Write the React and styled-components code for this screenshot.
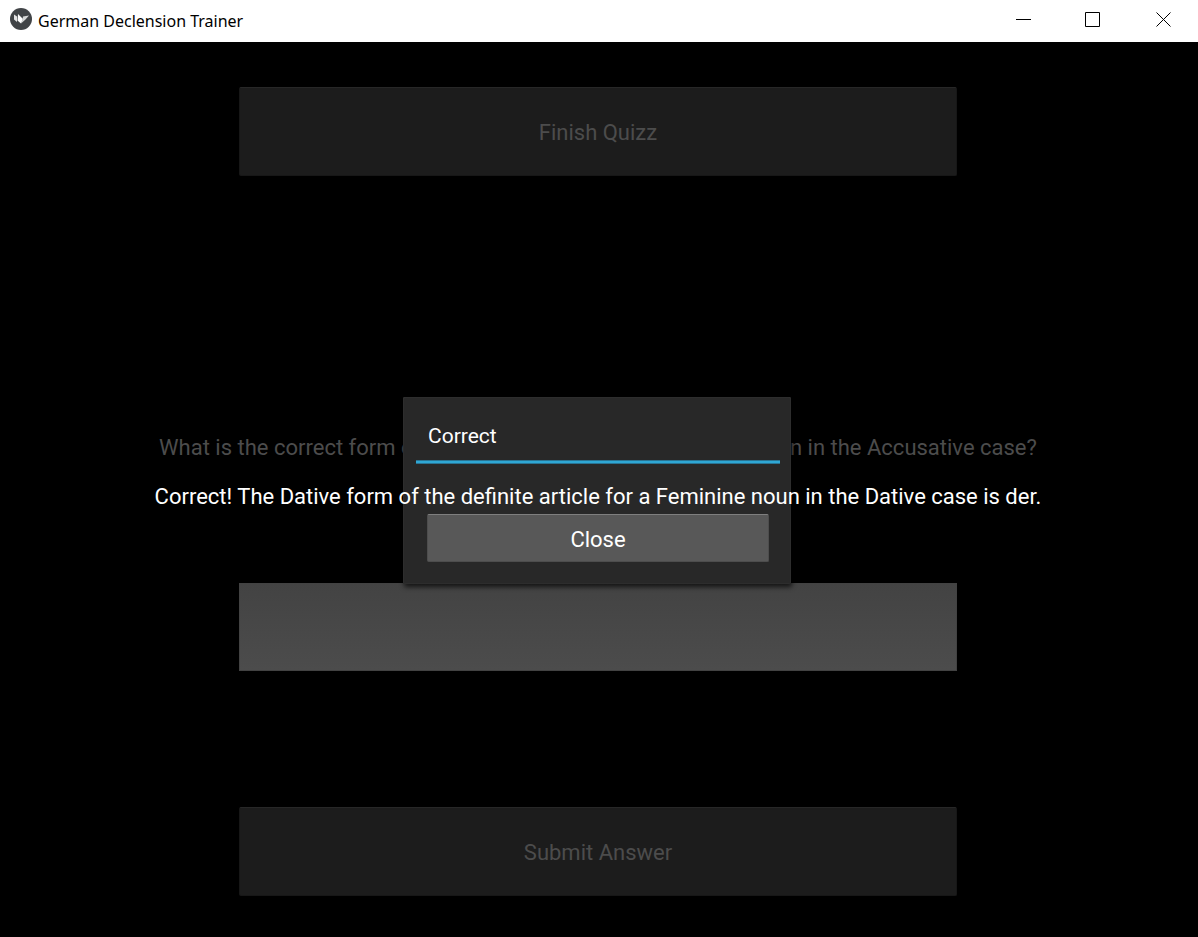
import React from "react";
import styled, { createGlobalStyle } from "styled-components";

const GlobalStyle = createGlobalStyle`
  * { box-sizing: border-box; }
  body { margin: 0; background: #000; font-family: Roboto, sans-serif; }
  button, input { font: inherit; margin: 0; padding: 0; }
`;

const Window = styled.div`
  display: flex;
  flex-direction: column;
  min-height: 100vh;
  overflow: hidden;
`;

const TitleBar = styled.header`
  display: flex;
  align-items: center;
  height: 42px;
  padding: 0 0 4px 10px;
  background: #fff;
  color: #000;
`;

const AppTitle = styled.h1`
  flex: 1;
  margin: 0 0 0 6px;
  padding-top: 4px;
  font: 400 16px/24px "Noto Sans", sans-serif;
`;

const WindowButton = styled.button`
  display: grid;
  place-items: center;
  width: 70px;
  height: 38px;
  border: 0;
  background: transparent;
`;

const Screen = styled.div`
  display: grid;
  flex: 1;
`;

const Quiz = styled.main`
  grid-area: 1 / 1;
  display: grid;
  grid-template-columns: 60%;
  grid-template-rows: 89px 1fr 2fr 88px 1fr 89px;
  justify-content: center;
  padding: 45px 2px 41px 0;
  font-size: 22px;
  line-height: 30px;
`;

const QuizButton = styled.button`
  grid-row: ${(p) => p.$row};
  padding-top: 3px;
  border: 1px solid #171717;
  border-top-color: #272727;
  border-radius: 2px;
  background: #1c1c1c;
  color: #4c4c4c;
`;

const Question = styled.label`
  grid-row: 3;
  place-self: center;
  color: #4c4c4c;
  white-space: nowrap;
`;

const AnswerInput = styled.input`
  grid-row: 4;
  width: 100%;
  padding: 0 12px;
  border: 1px solid #424242;
  border-radius: 0;
  outline: 0;
  background: linear-gradient(#434343, #4c4c4c);
  color: #000;
`;

const ModalLayer = styled.div`
  grid-area: 1 / 1;
  z-index: 1;
  display: grid;
  place-items: center;
  padding: 2px 4px 0 0;
`;

const Popup = styled.section`
  width: 388px;
  padding: 12px 11px 12px 13px;
  border-radius: 2px;
  background: #282828;
  box-shadow: inset 0 0 0 1px #2d2d2d, inset 0 1px #383838, 1px 3px 5px rgba(0, 0, 0, 0.7);
  color: #fff;
  font-size: 22px;
  line-height: 30px;
`;

const PopupTitle = styled.h2`
  margin: 0 0 1px;
  padding: 12px 12px 10px;
  border-bottom: 2px solid #2fa7d4;
  box-shadow: inset 0 -1px #297493, 0 1px #297493;
  font-size: 21px;
  font-weight: 400;
  line-height: 30px;
`;

const PopupBody = styled.div`
  display: flex;
  flex-direction: column;
  align-items: center;
  gap: 2px;
  padding: 18px 11px 10px;
`;

const Message = styled.p`
  margin: 0;
  white-space: nowrap;
`;

const CloseButton = styled.button`
  width: 100%;
  height: 48px;
  padding-top: 3px;
  border: 1px solid #4d4d4d;
  border-top-color: #7f7f7f;
  border-radius: 2px;
  background: #585858;
  color: #fff;
`;

function KivyLogo() {
  return (
    <svg width="22" height="22" viewBox="0 0 22 22" aria-hidden="true">
      <circle cx="11" cy="11" r="11" fill="#414447" />
      <path d="M4 6.5L7 8.5V14L4 11.5Z" fill="#e4e4e4" />
      <path d="M8 6L13 11L11 15.5L7.5 12.5Z" fill="#fff" />
      <path d="M13 8.5L19 7.5L15.5 11.5L11 15.5L12.5 11.5Z" fill="#d6d7d7" />
    </svg>
  );
}

function ControlIcon({ d }) {
  return (
    <svg width="16" height="16" viewBox="0 0 16 16" aria-hidden="true">
      <path d={d} fill="none" stroke="#000" strokeWidth="1" />
    </svg>
  );
}

const windowControls = [
  ["Minimize", "M1 8.5H16"],
  ["Maximize", "M0.5 1.5H14.5V15.5H0.5Z"],
  ["Close window", "M1.5 1.5L15.5 15.5M15.5 1.5L1.5 15.5"],
];

export default function App() {
  return (
    <Window>
      <GlobalStyle />
      <TitleBar>
        <KivyLogo />
        <AppTitle>German Declension Trainer</AppTitle>
        {windowControls.map(([label, d]) => (
          <WindowButton key={label} type="button" aria-label={label}>
            <ControlIcon d={d} />
          </WindowButton>
        ))}
      </TitleBar>
      <Screen>
        <Quiz>
          <QuizButton type="button" $row={1}>Finish Quizz</QuizButton>
          <Question htmlFor="answer">
            What is the correct form of the definite article for a Feminine noun in the Accusative case?
          </Question>
          <AnswerInput id="answer" type="text" />
          <QuizButton type="button" $row={6}>Submit Answer</QuizButton>
        </Quiz>
        <ModalLayer>
          <Popup role="dialog" aria-modal="true" aria-labelledby="popup-title">
            <PopupTitle id="popup-title">Correct</PopupTitle>
            <PopupBody>
              <Message>
                Correct! The Dative form of the definite article for a Feminine noun in the Dative case is der.
              </Message>
              <CloseButton type="button">Close</CloseButton>
            </PopupBody>
          </Popup>
        </ModalLayer>
      </Screen>
    </Window>
  );
}
